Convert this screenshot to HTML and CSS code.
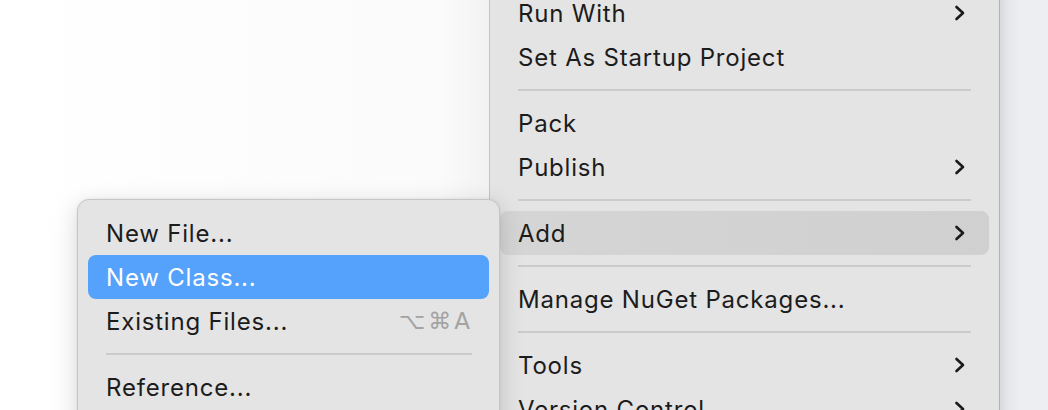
FILE: index.html
```html
<!DOCTYPE html>
<html>
<head>
<meta charset="utf-8">
<link rel="stylesheet" href="styles.css">
</head>
<body>
<div class="desktop">
  <div class="left-pane"></div>
  <div class="main-menu">
    <ul class="menu-list main-list">
      <li class="item">Run With<svg class="chev" viewBox="0 0 12 16"><path d="M2.5 2 L9 8 L2.5 14"/></svg></li>
      <li class="item">Set As Startup Project</li>
      <li class="sep"></li>
      <li class="item">Pack</li>
      <li class="item">Publish<svg class="chev" viewBox="0 0 12 16"><path d="M2.5 2 L9 8 L2.5 14"/></svg></li>
      <li class="sep"></li>
      <li class="item active">Add<svg class="chev" viewBox="0 0 12 16"><path d="M2.5 2 L9 8 L2.5 14"/></svg></li>
      <li class="sep"></li>
      <li class="item">Manage NuGet Packages...</li>
      <li class="sep"></li>
      <li class="item">Tools<svg class="chev" viewBox="0 0 12 16"><path d="M2.5 2 L9 8 L2.5 14"/></svg></li>
      <li class="item">Version Control<svg class="chev" viewBox="0 0 12 16"><path d="M2.5 2 L9 8 L2.5 14"/></svg></li>
    </ul>
  </div>
  <div class="right-pane"></div>

  <div class="submenu">
    <ul class="menu-list">
      <li class="item">New File...</li>
      <li class="item selected">New Class...</li>
      <li class="item">Existing Files...<span class="shortcut">⌥⌘A</span></li>
      <li class="sep"></li>
      <li class="item">Reference...</li>
    </ul>
  </div>
</div>
</body>
</html>
```

FILE: styles.css
```css
* { box-sizing: border-box; }
html, body { margin: 0; padding: 0; }
body {
  width: 1048px;
  height: 410px;
  overflow: hidden;
  background: #ffffff;
  font-family: Inter, "Noto Sans", "DejaVu Sans", sans-serif;
}
.desktop {
  position: relative;
  display: flex;
  width: 1048px;
  height: 410px;
  overflow: hidden;
}
.left-pane {
  width: 489px;
  flex: none;
  background: linear-gradient(to right, #ffffff 0, #fbfbfb 90%, #f2f2f2 100%);
}
.right-pane {
  flex: 1;
  background: linear-gradient(to right, #d9dadd 0, #e6e7ea 8px, #eceef1 20px);
}
.main-menu {
  width: 511px;
  flex: none;
  height: 100%;
  background: #e4e4e4;
  border-left: 1px solid #c4c4c4;
  border-right: 1px solid #b3b3b3;
  overflow: hidden;
}
.menu-list {
  list-style: none;
  margin: 0;
  padding: 0;
}
.main-list {
  margin-top: -9px;
}
.item {
  display: flex;
  align-items: center;
  justify-content: space-between;
  height: 44px;
  margin: 0 10px;
  padding: 0 33px 0 18px;
  font-size: 24px;
  letter-spacing: 0.8px;
  color: #1c1c1c;
  border-radius: 8px;
  white-space: nowrap;
}
.main-list .item {
  margin: 0 10px 0 10px;
  padding: 0 23px 0 18px;
}
.item.active {
  background: linear-gradient(to right, #d5d5d5, #d2d2d2 60%, #d0d0d0);
}
.chev {
  width: 12px;
  height: 16px;
  flex: none;
}
.chev path {
  fill: none;
  stroke: #1a1a1a;
  stroke-width: 2.6;
  stroke-linecap: round;
  stroke-linejoin: round;
}
.sep {
  height: 22px;
  display: flex;
  align-items: center;
  margin: 0 28px 0 28px;
}
.sep::before {
  content: "";
  display: block;
  width: 100%;
  height: 2px;
  background: #cbcbcb;
}
.submenu {
  position: absolute;
  left: 77px;
  top: 199px;
  width: 423px;
  height: 240px;
  background: #e4e4e4;
  border: 1px solid #c6c6c6;
  border-radius: 12px;
  padding-top: 11px;
  box-shadow: 0 6px 24px rgba(0, 0, 0, 0.16), 0 0 3px rgba(0, 0, 0, 0.08);
}
.submenu .item {
  margin: 0 10px;
  padding: 0 19px 0 18px;
}
.submenu .sep {
  margin: 0 27px 0 28px;
}
.item.selected {
  background: #54a2fb;
  color: #ffffff;
}
.shortcut {
  color: #a3a3a3;
  font-family: "DejaVu Sans", sans-serif;
  font-size: 23px;
  letter-spacing: 3px;
  margin-right: -3px;
}
```
